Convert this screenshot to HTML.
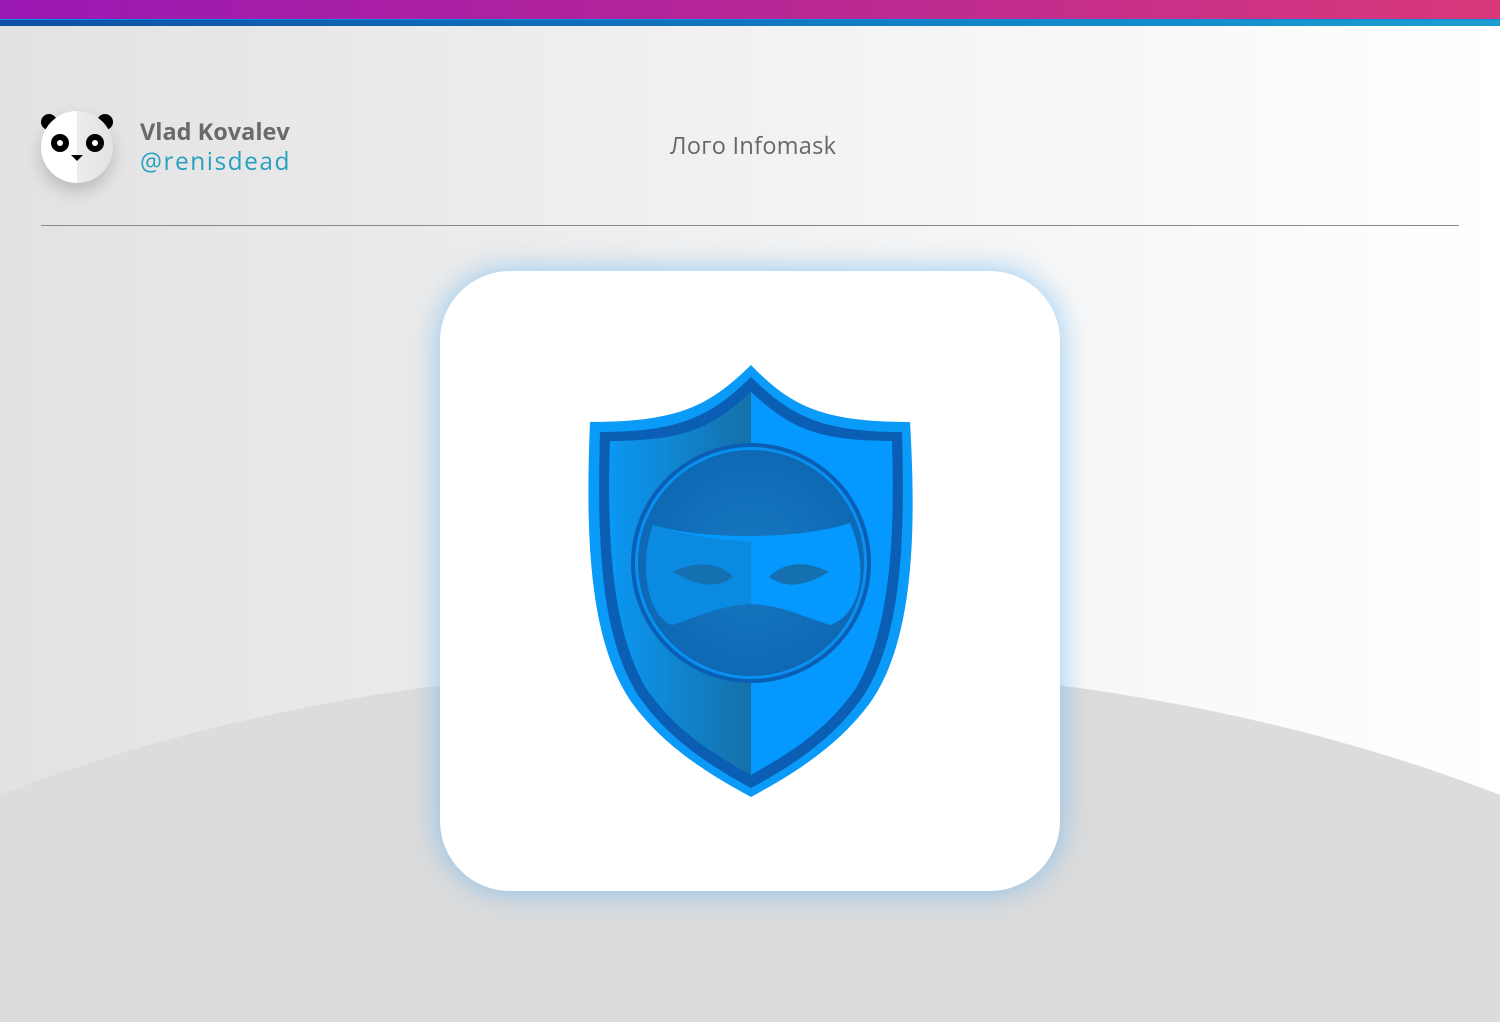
<!DOCTYPE html>
<html><head><meta charset="utf-8"><style>
html,body{margin:0;padding:0;width:1500px;height:1022px;overflow:hidden}
body{position:relative;font-family:"Open Sans","Liberation Sans",sans-serif;background:linear-gradient(90deg,#e2e2e2 0%,#f0f0f0 45%,#fff 100%)}
svg{display:block}
.clip{position:absolute;left:0;top:0;width:1500px;height:1022px;overflow:hidden}
.top{position:absolute;left:0;top:0;width:1500px;height:20px;background:linear-gradient(90deg,#9a18b4,#b0239c 40%,#d8387a)}
.line{position:absolute;left:0;top:19px;width:1500px;height:7px;background:linear-gradient(90deg,#0b4fa6,#1188c8 70%,#1aa0d0);border-top:1px solid #0a8de0;box-sizing:border-box}
.hill{position:absolute;left:-500px;top:665px;width:2500px;height:1300px;border-radius:50%;background:#dcdcdc}
.av{position:absolute;left:41px;top:111px;width:72px;height:72px;border-radius:50%;box-shadow:0 8px 16px rgba(0,0,0,.18)}
.name{position:absolute;left:140px;top:115px;font-size:23.5px;font-weight:bold;color:#6a6a6a}
.handle{position:absolute;left:140px;top:145px;font-size:24.5px;color:#27a0c0;letter-spacing:1.5px}
.title{position:absolute;left:670px;top:129px;font-size:23.5px;color:#666;letter-spacing:.3px}
.hr{position:absolute;left:41px;top:225px;width:1418px;height:1px;background:#888}
.card{position:absolute;left:440px;top:271px;width:620px;height:620px;border-radius:70px;background:#fff;box-shadow:0 0 30px rgba(80,170,240,.6)}
</style></head><body>
<div class="clip"><div class="hill"></div>
<div class="top"></div><div class="line"></div>
<svg class="av" viewBox="0 0 72 72" style="overflow:visible">
<circle cx="8" cy="11" r="8" fill="#000"/><circle cx="64" cy="11" r="8" fill="#000"/>
<defs><linearGradient id="pg" x1="0" x2="1"><stop offset=".5" stop-color="#fff"/><stop offset=".5" stop-color="#ececec"/><stop offset="1" stop-color="#e2e2e2"/></linearGradient></defs>
<circle cx="36" cy="36" r="36" fill="url(#pg)"/>
<circle cx="19" cy="32" r="9" fill="#000"/><circle cx="19" cy="32" r="3" fill="#fff"/>
<circle cx="54" cy="32" r="9" fill="#000"/><circle cx="54" cy="32" r="3" fill="#fff"/>
<path d="M30 44 L42 44 L36 50 Z" fill="#000"/>
</svg>
<div class="name">Vlad Kovalev</div>
<div class="handle">@renisdead</div>
<div class="title">Лого Infomask</div>
<div class="hr"></div>
<div class="card"></div>
<svg style="position:absolute;left:0;top:0" width="1500" height="1022">
<defs>
<linearGradient id="lg" x1="600" x2="751" gradientUnits="userSpaceOnUse"><stop offset="0" stop-color="#0a9af8"/><stop offset="1" stop-color="#1670a8"/></linearGradient>
<radialGradient id="cg" cx="751" cy="563" r="118" gradientUnits="userSpaceOnUse"><stop offset="0" stop-color="#1878c0"/><stop offset="1" stop-color="#0e68b4"/></radialGradient>
</defs>
<path d="M751 365 C710 405 680 422 590 422 C585 540 590 640 630 700 C665 750 720 780 751 797 C782 780 837 750 872 700 C912 640 917 540 910 422 C820 422 790 405 751 365 Z" fill="#0a9af8"/>
<path d="M751 377 C712 415 682 432 600 432 C597 540 600 635 638 695 C672 745 722 772 751 788 C780 772 830 745 864 695 C902 635 905 540 902 432 C820 432 790 415 751 377 Z" fill="#0a5fb4"/>
<path d="M751 392 C715 425 690 441 610 441 C607 540 612 630 646 688 C678 735 722 758 751 775 C780 758 824 735 856 688 C890 630 895 540 892 441 C812 441 787 425 751 392 Z" fill="#0599ff"/>
<path d="M751 392 C715 425 690 441 610 441 C607 540 612 630 646 688 C678 735 722 758 751 775 Z" fill="url(#lg)"/>
<circle cx="751" cy="563" r="120" fill="#0a5fb4"/>
<circle cx="751" cy="563" r="116" fill="#0990f0"/>
<circle cx="751" cy="563" r="113" fill="url(#cg)"/>
<path d="M653 525 C700 540 800 540 850 523 C870 570 860 615 830 625 C800 615 780 605 751 604 C722 605 702 615 672 625 C645 615 640 560 653 525 Z" fill="#0599ff"/>
<path d="M653 525 C700 540 740 541 751 541 L751 604 C722 605 702 615 672 625 C645 615 640 560 653 525 Z" fill="#0a8ae0"/>
<path d="M673 572 C695 560 720 562 733 577 C715 590 695 585 673 572 Z" fill="#1470b0"/>
<path d="M829 572 C807 560 782 562 769 577 C787 590 807 585 829 572 Z" fill="#1470b0"/>
</svg>
</div>
</body></html>
